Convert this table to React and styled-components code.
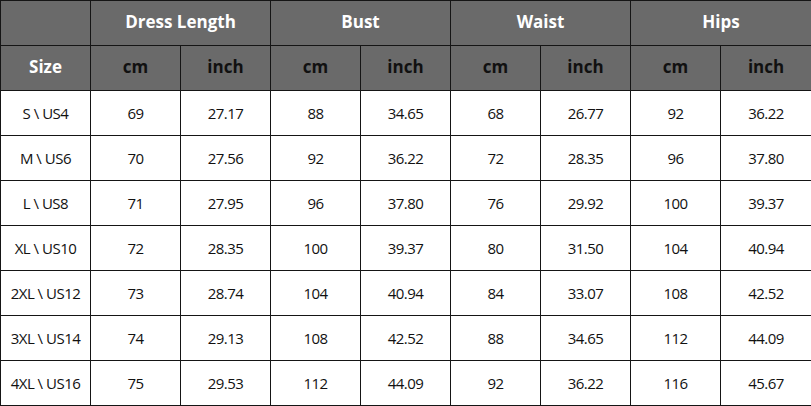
import React from "react";
import styled, { createGlobalStyle } from "styled-components";

const Global = createGlobalStyle`
  html, body { margin: 0; padding: 0; background: #ffffff; }
`;

const Table = styled.table`
  border-collapse: collapse;
  table-layout: fixed;
  width: 811px;
  font-family: "Open Sans", "Liberation Sans", sans-serif;
`;

const Col = styled.col`
  width: ${(p) => p.$w}px;
`;

const Cell = styled.td`
  height: ${(p) => (p.$head ? "41px" : "43px")};
  padding: 0 0 ${(p) => (p.$head ? "3px" : "1px")} 0;
  border: 1px solid #151515;
  text-align: center;
  vertical-align: middle;
  box-sizing: content-box;
  background: ${(p) => (p.$head ? "#6a6a6a" : "#ffffff")};
  color: ${(p) => (p.$light ? "#ffffff" : "#111111")};
  font-weight: ${(p) => (p.$head ? 700 : 400)};
  font-size: ${(p) => (p.$head ? "17px" : "15px")};
  letter-spacing: ${(p) => (p.$head ? "0" : "-0.5px")};
`;

const groups = ["Dress Length", "Bust", "Waist", "Hips"];

const rows = [
  ["S \\ US4", "69", "27.17", "88", "34.65", "68", "26.77", "92", "36.22"],
  ["M \\ US6", "70", "27.56", "92", "36.22", "72", "28.35", "96", "37.80"],
  ["L \\ US8", "71", "27.95", "96", "37.80", "76", "29.92", "100", "39.37"],
  ["XL \\ US10", "72", "28.35", "100", "39.37", "80", "31.50", "104", "40.94"],
  ["2XL \\ US12", "73", "28.74", "104", "40.94", "84", "33.07", "108", "42.52"],
  ["3XL \\ US14", "74", "29.13", "108", "42.52", "88", "34.65", "112", "44.09"],
  ["4XL \\ US16", "75", "29.53", "112", "44.09", "92", "36.22", "116", "45.67"],
];

export default function App() {
  return (
    <>
      <Global />
      <Table>
        <colgroup>
          <Col $w={90} />
          {Array.from({ length: 8 }).map((_, i) => (
            <Col key={i} $w={i === 7 ? 91 : 90} />
          ))}
        </colgroup>
        <thead>
          <tr>
            <Cell as="th" $head $light />
            {groups.map((g) => (
              <Cell as="th" key={g} colSpan={2} $head $light>
                {g}
              </Cell>
            ))}
          </tr>
          <tr>
            <Cell as="th" $head $light>
              Size
            </Cell>
            {groups.map((g) => (
              <React.Fragment key={g}>
                <Cell as="th" $head>
                  cm
                </Cell>
                <Cell as="th" $head>
                  inch
                </Cell>
              </React.Fragment>
            ))}
          </tr>
        </thead>
        <tbody>
          {rows.map((r) => (
            <tr key={r[0]}>
              {r.map((v, i) => (
                <Cell key={i}>{v}</Cell>
              ))}
            </tr>
          ))}
        </tbody>
      </Table>
    </>
  );
}
